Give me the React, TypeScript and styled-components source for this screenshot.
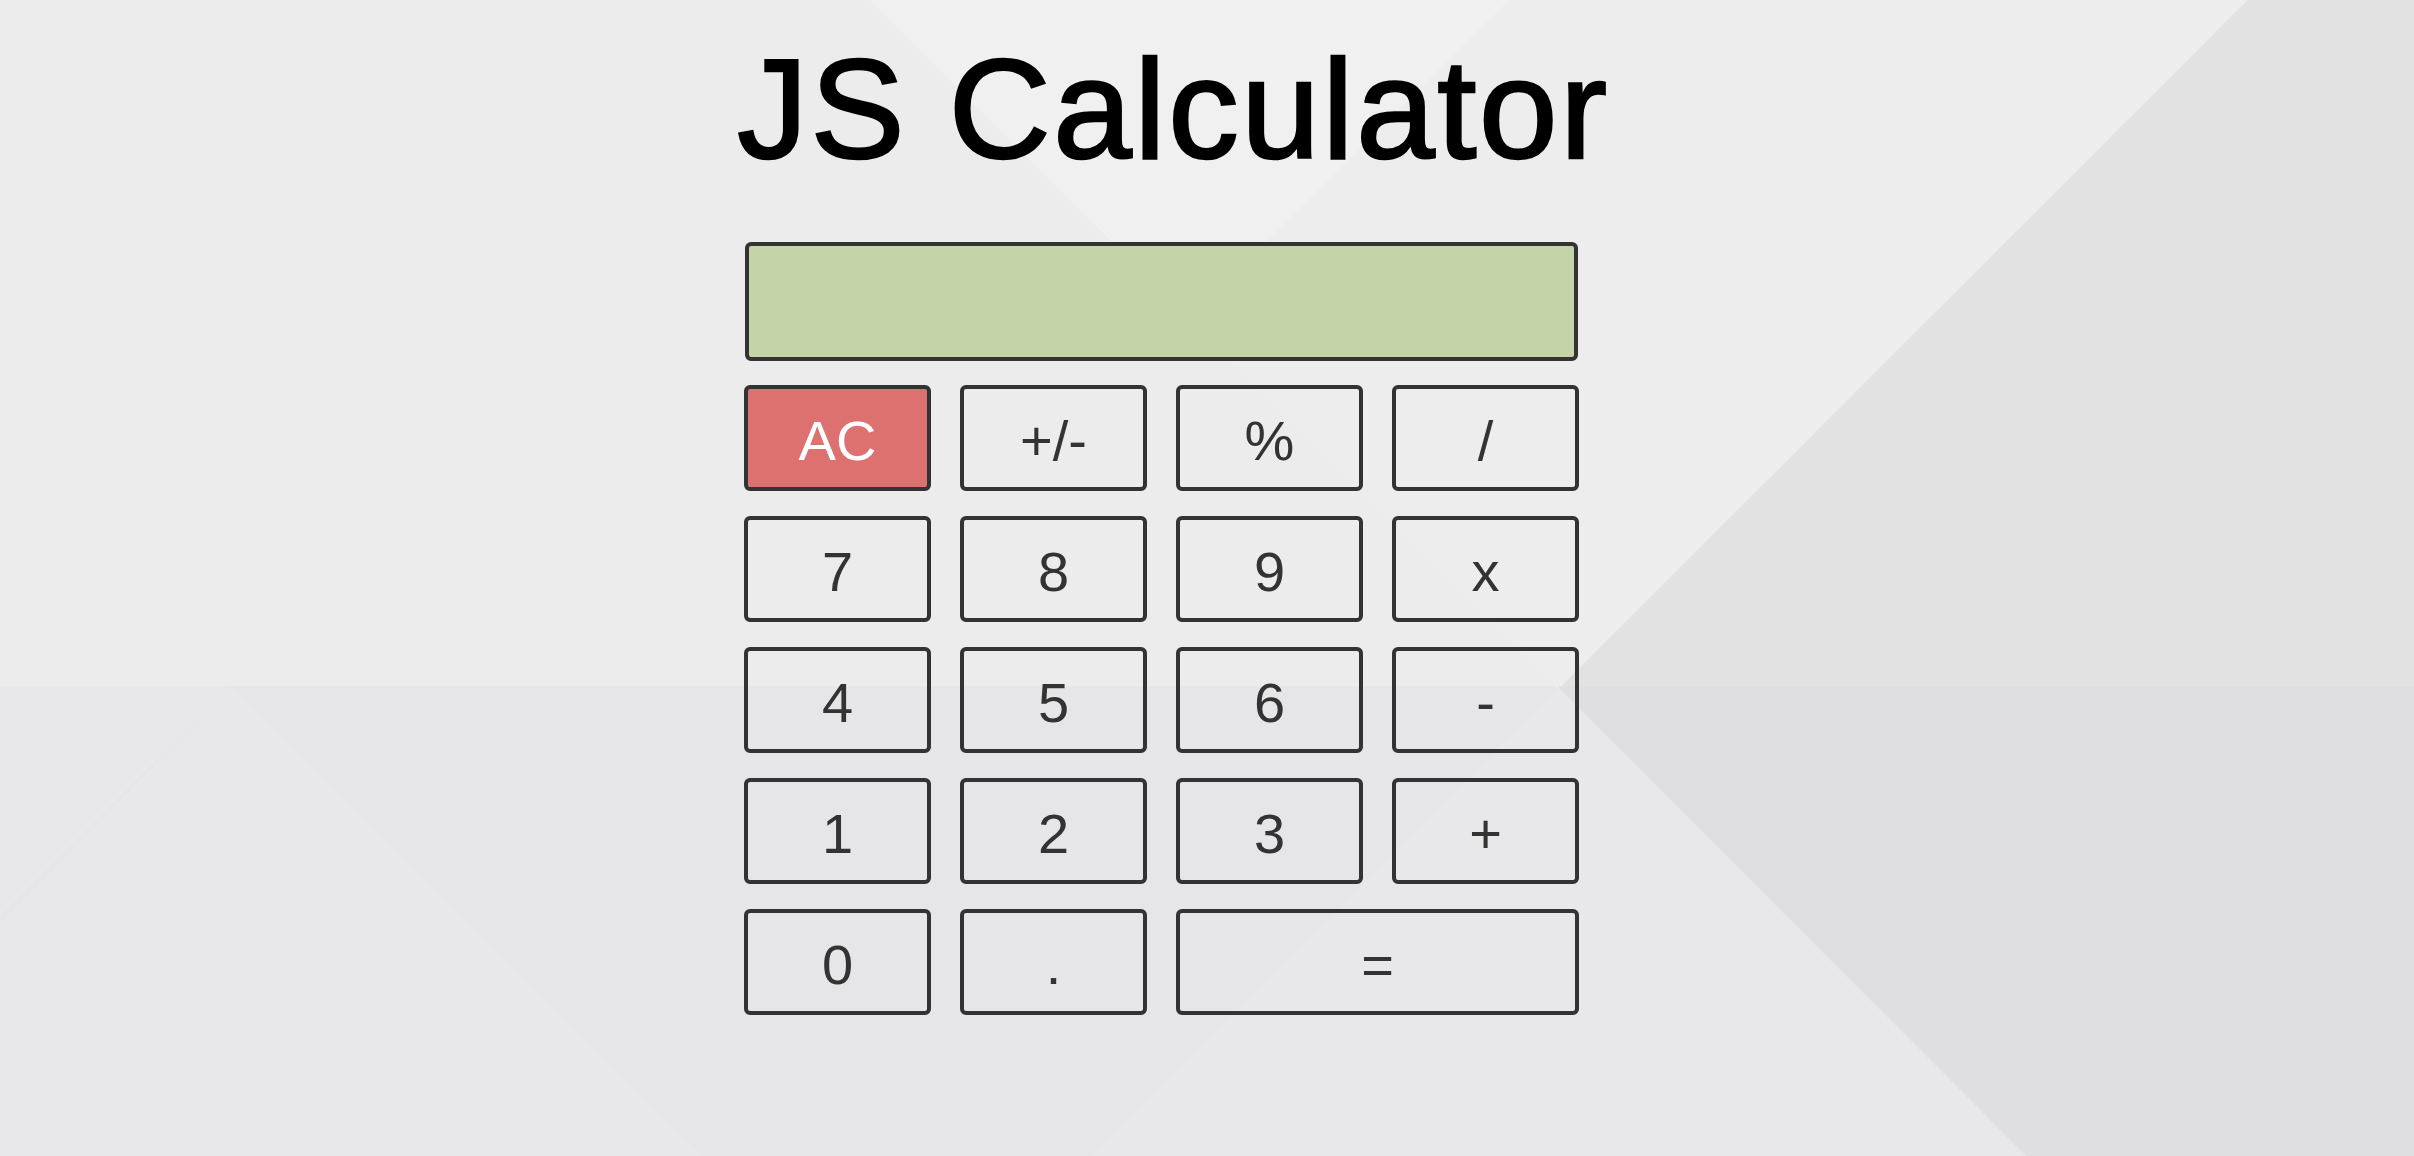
import React from "react";
import styled, { createGlobalStyle } from "styled-components";

const GlobalStyle = createGlobalStyle`
  html, body {
    margin: 0;
    padding: 0;
    background: #ebebeb;
  }
  body {
    font-family: "Liberation Sans", Arial, Helvetica, sans-serif;
    min-height: 100vh;
  }
  * { box-sizing: border-box; }
`;

const Backdrop = styled.svg`
  position: fixed;
  inset: 0;
  width: 100vw;
  height: 100vh;
  z-index: 0;
  display: block;
`;

const Page = styled.main`
  position: relative;
  z-index: 1;
  min-height: 100vh;
  display: flex;
  flex-direction: column;
  align-items: center;
  padding-right: 91px;
`;

const Title = styled.h1`
  margin: 39px 0 62px 24px;
  font-family: "Liberation Sans", Arial, Helvetica, sans-serif;
  font-size: 141px;
  line-height: 141px;
  font-weight: 400;
  letter-spacing: 2.6px;
  color: #000;
  -webkit-text-stroke: 2.5px #000;
  white-space: nowrap;
`;

const Calculator = styled.section`
  width: 835px;
  display: flex;
  flex-direction: column;
  gap: 24px;
`;

const Display = styled.div`
  width: 833px;
  margin-left: 1px;
  height: 119px;
  background: #c5d3a8;
  border: 4px solid #333;
  border-radius: 6px;
`;

const Keypad = styled.div`
  display: grid;
  grid-template-columns: repeat(4, 187px);
  grid-auto-rows: 106px;
  column-gap: 29px;
  row-gap: 25px;
`;

const Key = styled.button<{ $variant?: "clear"; $span?: number }>`
  grid-column: span ${(p) => p.$span ?? 1};
  display: flex;
  align-items: center;
  justify-content: center;
  padding: 5px 0 0;
  margin: 0;
  border: 4px solid #333;
  border-radius: 6px;
  background: ${(p) => (p.$variant === "clear" ? "#dc7170" : "transparent")};
  color: ${(p) => (p.$variant === "clear" ? "#ffffff" : "#333333")};
  font-family: "Liberation Sans", Arial, Helvetica, sans-serif;
  font-size: 56px;
  line-height: 1;
  cursor: pointer;
`;

type KeyDef = { label: string; variant?: "clear"; span?: number };

const keys: KeyDef[] = [
  { label: "AC", variant: "clear" },
  { label: "+/-" },
  { label: "%" },
  { label: "/" },
  { label: "7" },
  { label: "8" },
  { label: "9" },
  { label: "x" },
  { label: "4" },
  { label: "5" },
  { label: "6" },
  { label: "-" },
  { label: "1" },
  { label: "2" },
  { label: "3" },
  { label: "+" },
  { label: "0" },
  { label: "." },
  { label: "=", span: 2 },
];

function Background() {
  return (
    <Backdrop viewBox="0 0 1568 751" preserveAspectRatio="none" aria-hidden="true">
      <rect x="0" y="0" width="1568" height="446" fill="#ececec" />
      <rect x="0" y="446" width="1568" height="305" fill="#e6e5e7" />
      {/* left diamond */}
      <polygon points="0,295 150,445 0,595" fill="#ebebeb" />
      <polygon points="0,446 150,446 0,595" fill="#e8e7e9" />
      {/* bottom left light band */}
      <polygon points="0,600 150,446 456,751 0,751" fill="#e8e7e9" />
      {/* top middle triangle */}
      <polygon points="565,0 1460,0 1012,447" fill="#ededed" />
      <polygon points="565,0 980,0 772,207" fill="#f0f0f0" />
      {/* bottom middle triangle */}
      <polygon points="709,751 1316,751 1012,447" fill="#e8e7e9" />
      {/* right dark region */}
      <polygon points="1460,0 1568,0 1568,446 1014,446" fill="#e2e2e2" />
      <polygon points="1012,446 1568,446 1568,751 1316,751" fill="#dfdee0" />
    </Backdrop>
  );
}

export default function App() {
  return (
    <>
      <GlobalStyle />
      <Background />
      <Page>
        <Title>JS Calculator</Title>
        <Calculator>
          <Display />
          <Keypad>
            {keys.map((k) => (
              <Key key={k.label} $variant={k.variant} $span={k.span}>
                {k.label}
              </Key>
            ))}
          </Keypad>
        </Calculator>
      </Page>
    </>
  );
}
